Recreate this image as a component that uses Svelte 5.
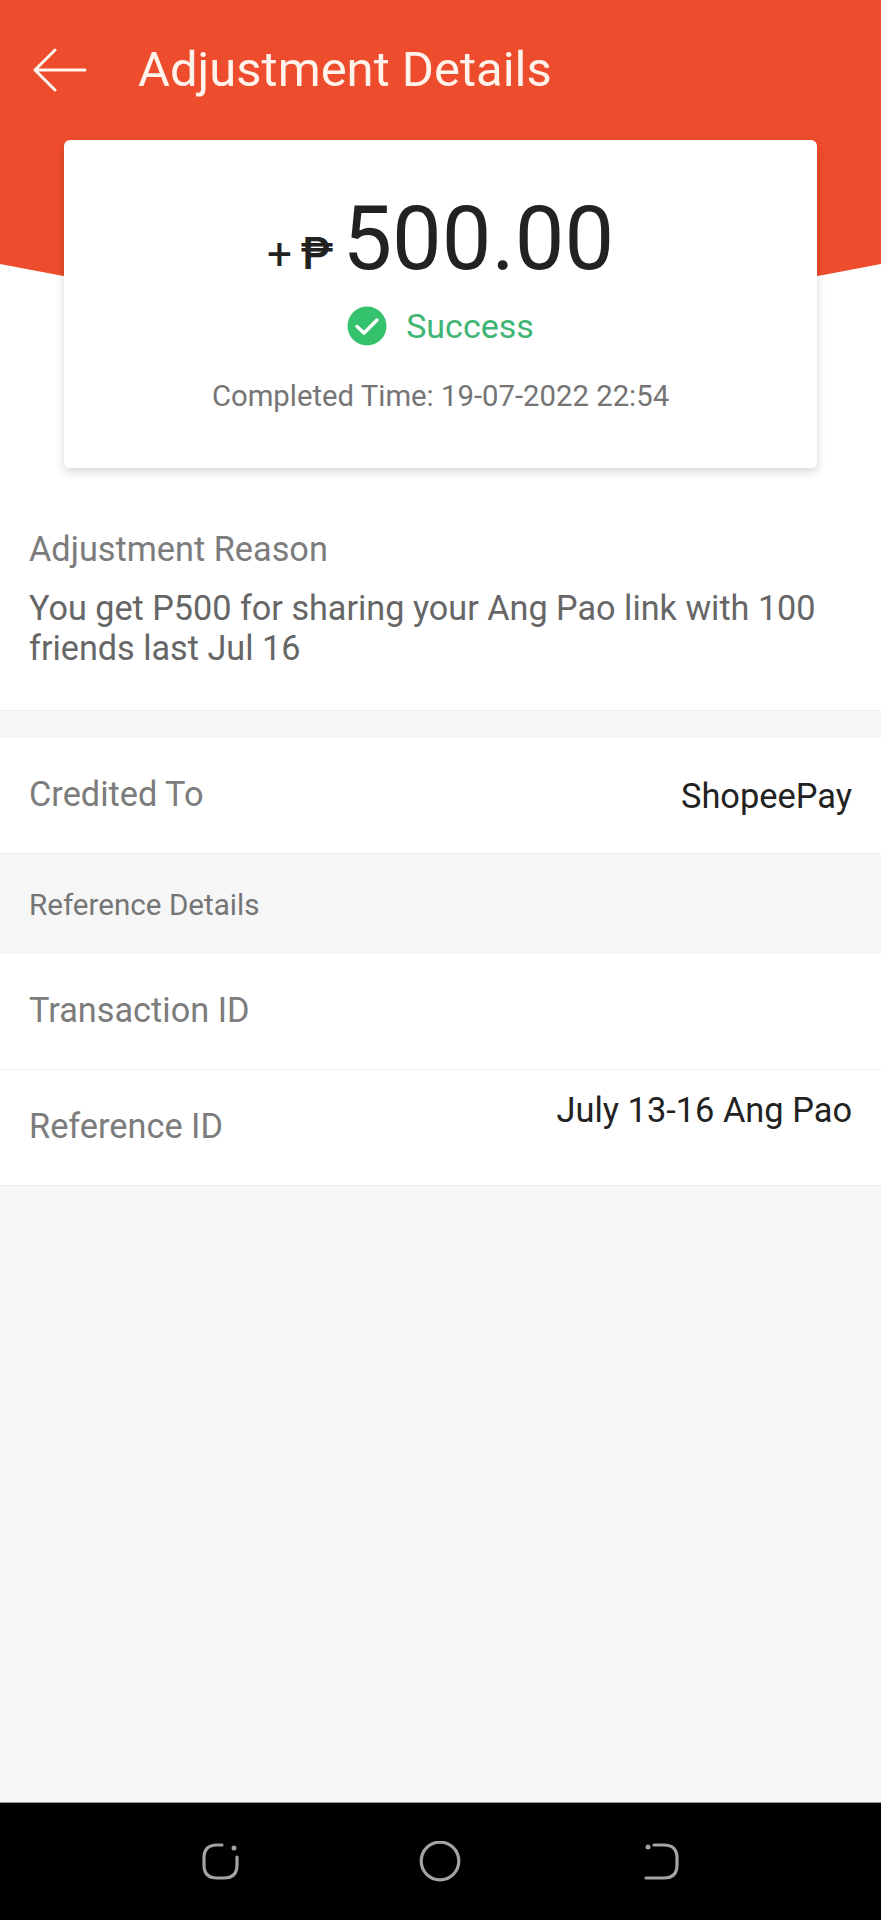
<script>
  const rows = [
    { label: 'Transaction ID', value: '' },
    { label: 'Reference ID', value: 'July 13-16 Ang Pao', raised: true }
  ];
</script>

<div class="screen">
  <svg class="bg" width="881" height="360" viewBox="0 0 881 360" aria-hidden="true">
    <path d="M0 0H881V264Q440.5 354 0 264Z" fill="#ee4d2d" />
  </svg>

  <header class="bar">
    <svg class="back" width="54" height="44" viewBox="0 0 54 44" fill="none" stroke="#fff6f0" stroke-width="3" stroke-linecap="round" stroke-linejoin="round">
      <path d="M2 22H52M22 2 2 22 22 42" />
    </svg>
    <h1>Adjustment Details</h1>
  </header>

  <section class="card">
    <div class="amount">
      <span class="plus">+</span>
      <span class="peso">₱</span>
      <span class="num">500.00</span>
    </div>
    <div class="status">
      <svg width="40" height="40" viewBox="0 0 40 40">
        <circle cx="20" cy="20" r="19.5" fill="#35c26d" />
        <path d="M10 20.5 17 27 30 14" fill="none" stroke="#fff" stroke-width="3.4" stroke-linecap="round" stroke-linejoin="round" />
      </svg>
      <span>Success</span>
    </div>
    <p class="time">Completed Time: 19-07-2022 22:54</p>
  </section>

  <section class="reason">
    <div class="reason-label">Adjustment Reason</div>
    <p>You get P500 for sharing your Ang Pao link with 100 friends last Jul 16</p>
  </section>

  <div class="row credited">
    <span class="label">Credited To</span>
    <span class="value">ShopeePay</span>
  </div>

  <div class="section-title">Reference Details</div>

  {#each rows as row}
    <div class="row">
      <span class="label">{row.label}</span>
      {#if row.value}<span class="value" class:raised={row.raised}>{row.value}</span>{/if}
    </div>
  {/each}

  <div class="fill"></div>

  <nav class="sysnav">
    <svg width="42" height="42" viewBox="0 0 42 42" fill="none" stroke="#a3a3a3" stroke-width="3.2" stroke-linecap="round">
      <path d="M23 4H18Q5 4 5 17V24Q5 37 18 37H25Q38 37 38 24V16" />
      <circle cx="35" cy="7" r="2.5" fill="#a3a3a3" stroke="none" />
    </svg>
    <svg width="42" height="42" viewBox="0 0 42 42" fill="none" stroke="#a3a3a3" stroke-width="3.2">
      <circle cx="21" cy="20" r="18.8" />
    </svg>
    <svg width="42" height="42" viewBox="0 0 42 42" fill="none" stroke="#a3a3a3" stroke-width="3.2" stroke-linecap="round">
      <path d="M15 4H25Q38 4 38 17V24Q38 37 25 37H7" />
      <circle cx="9" cy="6" r="2.5" fill="#a3a3a3" stroke="none" />
    </svg>
  </nav>
</div>

<style>
  :global(body) {
    margin: 0;
  }
  .screen {
    position: relative;
    width: 881px;
    height: 1920px;
    display: flex;
    flex-direction: column;
    background: #f6f6f6;
    font-family: Roboto, "Liberation Sans", sans-serif;
    overflow: hidden;
  }
  .bg {
    position: absolute;
    top: 0;
    left: 0;
  }
  .screen::before {
    content: "";
    position: absolute;
    top: 0;
    left: 0;
    width: 881px;
    height: 710px;
    background: #fff;
    border-bottom: 1px solid #eee;
  }
  .bar, .card, .reason {
    position: relative;
  }
  .bar {
    height: 140px;
    box-sizing: border-box;
    padding: 0 0 0 33px;
    display: flex;
    align-items: center;
    gap: 51px;
    color: #fff;
  }
  .back {
    flex: none;
  }
  h1 {
    margin: 0;
    font-size: 49px;
    font-weight: 400;
    line-height: 58px;
    color: #fff3ec;
  }
  .card {
    width: 753px;
    height: 328px;
    margin-left: 64px;
    background: #fff;
    border-radius: 6px;
    box-shadow: 0 4px 10px rgba(0, 0, 0, 0.16);
    display: flex;
    flex-direction: column;
    align-items: center;
  }
  .amount {
    margin-top: 49px;
    height: 100px;
    display: flex;
    align-items: baseline;
    color: #222;
  }
  .plus {
    font-size: 44px;
    margin-right: 9px;
  }
  .peso {
    font-size: 44px;
    font-weight: 500;
    margin-right: 9px;
  }
  .num {
    font-size: 88.4px;
    line-height: 100px;
  }
  .status {
    margin-top: 17px;
    display: flex;
    align-items: center;
    gap: 19px;
    color: #3fb573;
    font-size: 34px;
  }
  .time {
    margin: 33px 0 0;
    font-size: 29.3px;
    line-height: 34px;
    color: #757575;
  }
  .reason {
    height: 243px;
    box-sizing: border-box;
    padding: 0 29px;
    color: #6e6e6e;
  }
  .reason-label {
    margin-top: 63px;
    font-size: 34.3px;
    line-height: 36px;
    color: #7c7c7c;
  }
  .reason p {
    margin: 21px 0 0;
    font-size: 34.2px;
    line-height: 40px;
    color: #666;
  }
  .row {
    position: relative;
    height: 116px;
    box-sizing: border-box;
    padding: 0 29px;
    background: #fff;
    border-bottom: 1px solid #eee;
    display: flex;
    align-items: center;
    justify-content: space-between;
  }
  .credited {
    margin-top: 27px;
  }
  .label {
    font-size: 34.3px;
    color: #7c7c7c;
    margin-top: -3px;
  }
  .value {
    font-size: 34.4px;
    color: #222;
  }
  .raised {
    margin-top: -36px;
  }
  .section-title {
    height: 100px;
    box-sizing: border-box;
    padding: 2px 29px 0;
    display: flex;
    align-items: center;
    font-size: 29.6px;
    color: #757575;
    position: relative;
  }
  .fill {
    flex: 1;
  }
  .sysnav {
    height: 117px;
    background: #000;
    border-top: 1px solid #999;
    position: relative;
    display: grid;
    grid-template-columns: repeat(3, 42px);
    justify-content: space-between;
    align-items: center;
    padding: 0 200px 0 199px;
  }
</style>
